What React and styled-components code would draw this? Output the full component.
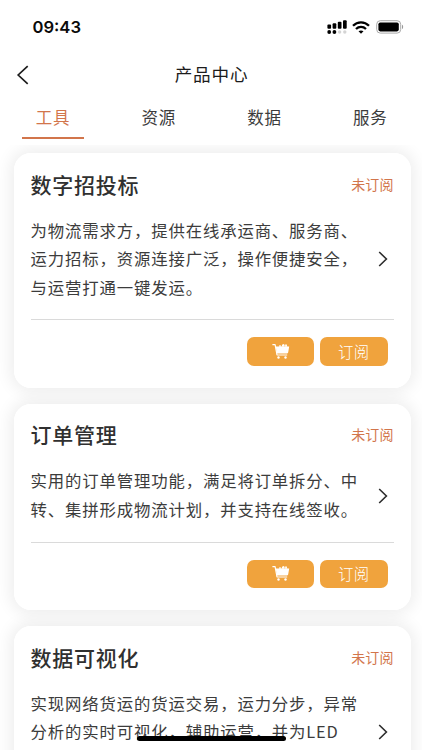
import React from 'react';
import styled, { createGlobalStyle } from 'styled-components';

const GlobalStyle = createGlobalStyle`
  * { box-sizing: border-box; }
  body { margin: 0; background: #fff; overflow: hidden; }
`;

const Screen = styled.div`
  position: relative;
  display: flex;
  flex-direction: column;
  width: 422px;
  height: 750px;
  overflow: hidden;
  background: #fff;
  color: #333;
  font-family: 'Noto Sans CJK SC', sans-serif;
`;

const StatusBar = styled.header`
  display: flex;
  flex: none;
  align-items: center;
  justify-content: space-between;
  height: 54px;
  padding: 0 18.5px 0 32.5px;
`;

const Clock = styled.time`
  color: #0a0a0a;
  font: 600 16.6px/20px Inter, sans-serif;
  letter-spacing: 0;
`;

const StatusIcons = styled.div`
  display: flex;
  align-items: center;
  gap: 5.5px;
  svg { display: block; }
`;

const NavBar = styled.nav`
  display: grid;
  flex: none;
  grid-template-columns: 60px 1fr 60px;
  align-items: center;
  height: 42px;
`;

const BackButton = styled.button`
  display: flex;
  padding: 0 0 0 16px;
  border: 0;
  background: none;
`;

const PageTitle = styled.h1`
  margin: 0;
  padding: 0 0 2px 1px;
  color: #1c1c1c;
  font-size: 17.6px;
  font-weight: 400;
  line-height: 28px;
  letter-spacing: 0.8px;
  text-align: center;
`;

const Tabs = styled.div`
  display: grid;
  flex: none;
  grid-template-columns: repeat(4, 105.8px);
  height: 49px;
`;

const Tab = styled.button`
  display: flex;
  flex-direction: column;
  align-items: center;
  height: 43px;
  padding: 8px 0 0;
  border: 0;
  background: none;
  color: ${({ $active }) => ($active ? '#d2754b' : '#3c3c3c')};
  font: 400 16.5px/26px 'Noto Sans CJK SC', sans-serif;
  letter-spacing: 0.7px;
  &::after {
    width: 62px;
    height: 2px;
    margin-top: 7px;
    background: ${({ $active }) => ($active ? '#d2754b' : 'transparent')};
    content: '';
  }
`;

const CardList = styled.main`
  display: flex;
  flex: 1;
  flex-direction: column;
  gap: 16px;
  min-height: 0;
  padding: 8px 11.5px 0 13.5px;
  overflow: hidden;
  isolation: isolate;
`;

const Card = styled.article`
  position: relative;
  flex: none;
  padding: 15.5px 17px 22px;
  border-radius: 17px;
  background: #fff;
  &::before {
    position: absolute;
    z-index: -1;
    inset: 0;
    border-radius: inherit;
    box-shadow: 0 0 16px 4px rgba(0, 0, 0, 0.07);
    content: '';
  }
`;

const CardHeader = styled.div`
  display: flex;
  align-items: center;
  justify-content: space-between;
  height: 30px;
`;

const CardTitle = styled.h2`
  margin: 0;
  color: #303030;
  font-size: 21px;
  font-weight: 500;
  line-height: 30px;
  letter-spacing: 0.75px;
`;

const Status = styled.span`
  color: #d2754b;
  font-size: 14px;
  line-height: 20px;
  letter-spacing: 0.1px;
`;

const CardBody = styled.div`
  display: flex;
  align-items: center;
  justify-content: space-between;
  padding: 17px 6px 18.3px 0;
  border-bottom: 1.5px solid #dadada;
  svg { flex: none; margin-top: 2px; }
`;

const Description = styled.p`
  min-height: ${({ $rows }) => $rows * 28.5}px;
  margin: 0;
  color: #3c3c3c;
  font-size: 16.4px;
  line-height: 28.5px;
  letter-spacing: 0.85px;
  white-space: pre-line;
`;

const Actions = styled.div`
  display: flex;
  justify-content: flex-end;
  gap: 6px;
  padding: 17px 6px 0 0;
`;

const ActionButton = styled.button`
  display: flex;
  align-items: center;
  justify-content: center;
  width: 67.5px;
  height: 28.5px;
  padding: 0 0 2px;
  border: 0;
  border-radius: 7px;
  background: #f0a33d;
  color: #fff;
  font: 300 15.4px/24px 'Noto Sans CJK SC', sans-serif;
  letter-spacing: 0.3px;
  svg { margin-left: 2px; }
`;

const HomeIndicator = styled.div`
  position: absolute;
  bottom: 9px;
  left: 137px;
  width: 149px;
  height: 5px;
  border-radius: 3px;
  background: #000;
`;

const Signal = () => (
  <svg width="20" height="14" viewBox="0 0 20 14">
    <rect x="0.4" y="4.4" width="3.7" height="4.4" rx="1" />
    <rect x="5.6" y="3.2" width="3.7" height="5.6" rx="1" />
    <rect x="10.8" y="1.8" width="3.7" height="7" rx="1" />
    <rect x="16" y="0.3" width="3.7" height="8.5" rx="1" />
    <circle cx="2.2" cy="12" r="1.9" />
    <circle cx="7.4" cy="12" r="1.9" />
    <circle cx="12.6" cy="12" r="1.7" fill="#d4d4d4" />
    <circle cx="17.8" cy="12" r="1.7" fill="#d4d4d4" />
  </svg>
);

const Wifi = () => (
  <svg width="18" height="13" viewBox="0 0 18 13" fill="none" stroke="#000" strokeWidth="2.3">
    <path d="M1 4.8C5.5.2 12.5.2 17 4.8" />
    <path d="M4 8c2.9-2.8 7.1-2.8 10 0" />
    <path d="M9 12.8 6.5 10.3c1.4-1.2 3.6-1.2 5 0Z" fill="#000" stroke="none" />
  </svg>
);

const Battery = () => (
  <svg width="28" height="14" viewBox="0 0 28 14">
    <rect x="0.7" y="0.7" width="24" height="12.4" rx="3.6" fill="#fff" stroke="#aaa" />
    <rect x="2.4" y="2.4" width="20.4" height="9" rx="1.8" />
    <path d="M26 4.8c1.5.4 1.5 3.8 0 4.2Z" fill="#999" />
  </svg>
);

const BackIcon = () => (
  <svg width="13" height="20" viewBox="0 0 13 20" fill="none" stroke="#1c1c1c" strokeWidth="1.7">
    <path d="M11.7 1.2 2.2 10l9.5 8.8" />
  </svg>
);

const ForwardIcon = () => (
  <svg width="10" height="16" viewBox="0 0 10 16" fill="none" stroke="#2d2d2d" strokeWidth="1.6">
    <path d="m1.2 1 7.2 7-7.2 7" />
  </svg>
);

const CartIcon = () => (
  <svg width="18" height="16" viewBox="0 0 18 16" fill="#fff">
    <path d="M.4 1.6h2.7L5 12h10.2" fill="none" stroke="#fff" strokeWidth="1.2" strokeLinejoin="round" />
    <path d="M3.7 3.6h13.5l-1 5.6c-.1.8-.6 1.2-1.3 1.2H5Z" />
    <path d="m6.7 3.7 1-1.6 1.4.6.6 1Zm3.2 0 .1-2 1.8-.8.9 1.2-.2 1.6Zm3.2 0 .1-2.2 1.3-.2.9 2.4Z" />
    <circle cx="6.5" cy="14.5" r="1.2" />
    <circle cx="13.5" cy="14.5" r="1.2" />
  </svg>
);

const tabs = ['工具', '资源', '数据', '服务'];

const products = [
  {
    title: '数字招投标',
    rows: 3,
    text: '为物流需求方，提供在线承运商、服务商、\n运力招标，资源连接广泛，操作便捷安全，\n与运营打通一键发运。',
  },
  {
    title: '订单管理',
    rows: 2,
    text: '实用的订单管理功能，满足将订单拆分、中\n转、集拼形成物流计划，并支持在线签收。',
  },
  {
    title: '数据可视化',
    rows: 3,
    text: '实现网络货运的货运交易，运力分步，异常\n分析的实时可视化，辅助运营，并为LED',
  },
];

export default function App() {
  return (
    <Screen>
      <GlobalStyle />
      <StatusBar>
        <Clock>09:43</Clock>
        <StatusIcons>
          <Signal />
          <Wifi />
          <Battery />
        </StatusIcons>
      </StatusBar>
      <NavBar>
        <BackButton aria-label="返回"><BackIcon /></BackButton>
        <PageTitle>产品中心</PageTitle>
      </NavBar>
      <Tabs>
        {tabs.map((label, i) => (
          <Tab key={label} $active={i === 0}>{label}</Tab>
        ))}
      </Tabs>
      <CardList>
        {products.map(({ title, rows, text }) => (
          <Card key={title}>
            <CardHeader>
              <CardTitle>{title}</CardTitle>
              <Status>未订阅</Status>
            </CardHeader>
            <CardBody>
              <Description $rows={rows}>{text}</Description>
              <ForwardIcon />
            </CardBody>
            <Actions>
              <ActionButton aria-label="加入购物车"><CartIcon /></ActionButton>
              <ActionButton>订阅</ActionButton>
            </Actions>
          </Card>
        ))}
      </CardList>
      <HomeIndicator />
    </Screen>
  );
}
